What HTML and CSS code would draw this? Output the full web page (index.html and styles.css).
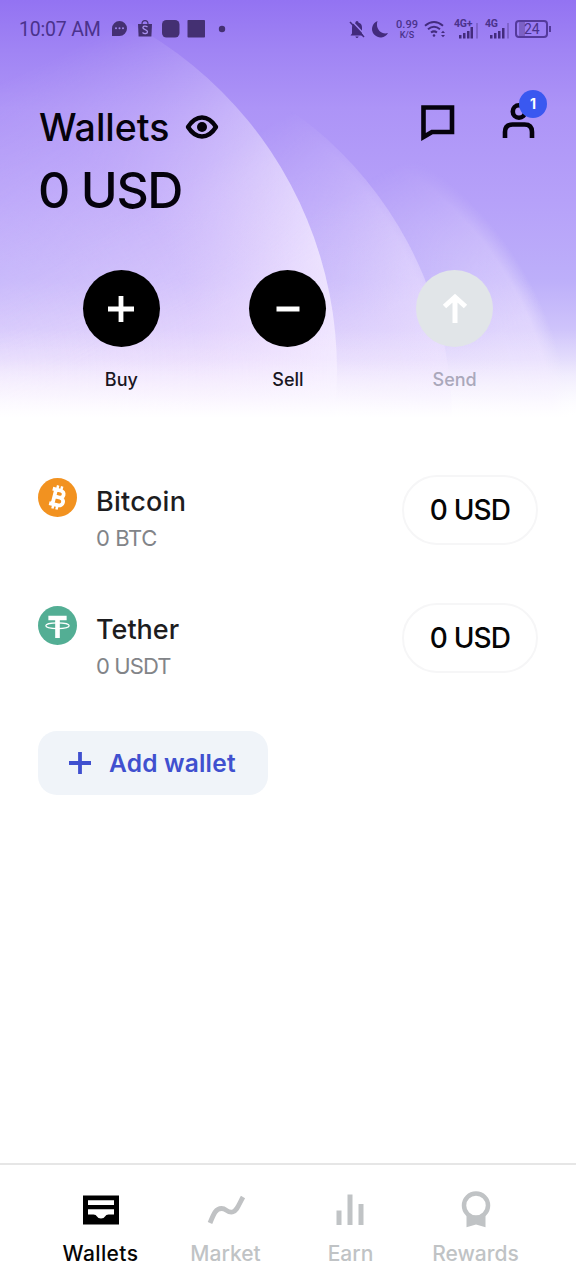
FILE: index.html
```html
<!DOCTYPE html>
<html lang="en">
<head>
<meta charset="utf-8">
<meta name="viewport" content="width=device-width, initial-scale=1">
<title>Wallets</title>
<link rel="stylesheet" href="styles.css">
</head>
<body>
<div class="app">
  <header class="hero">
    <svg class="hero-art" viewBox="0 0 576 418" aria-hidden="true">
      <defs>
        <linearGradient id="base" x1="0" y1="0" x2="0" y2="1">
          <stop offset="0" stop-color="#9373f2"/><stop offset=".12" stop-color="#a084f4"/>
          <stop offset=".26" stop-color="#ad94f7"/><stop offset=".48" stop-color="#b6a1f9"/>
          <stop offset=".67" stop-color="#bdaffa"/><stop offset=".79" stop-color="#cfc4fb"/>
          <stop offset=".9" stop-color="#ebe5fd"/><stop offset="1" stop-color="#fff"/>
        </linearGradient>
        <radialGradient id="a1" gradientUnits="userSpaceOnUse" cx="-57" cy="370" r="394">
          <stop offset=".1" stop-color="#f6e2ff" stop-opacity=".3"/><stop offset=".65" stop-color="#f3e0ff" stop-opacity=".42"/><stop offset="1" stop-color="#f4ebff" stop-opacity=".8"/>
        </radialGradient>
        <radialGradient id="a2" gradientUnits="userSpaceOnUse" cx="74" cy="420" r="378">
          <stop offset=".6" stop-color="#f0ddff" stop-opacity=".2"/><stop offset=".98" stop-color="#eee2ff" stop-opacity=".6"/><stop offset="1" stop-color="#eee2ff" stop-opacity=".5"/>
        </radialGradient>
        <radialGradient id="a3" gradientUnits="userSpaceOnUse" cx="220" cy="450" r="353">
          <stop offset=".6" stop-color="#f0e0ff" stop-opacity=".2"/><stop offset=".86" stop-color="#f0e5ff" stop-opacity=".5"/><stop offset=".95" stop-color="#f0e5ff" stop-opacity=".54"/><stop offset="1" stop-color="#f0e8ff" stop-opacity="0"/>
        </radialGradient>
        <linearGradient id="rise1" gradientUnits="userSpaceOnUse" x1="105" y1="30" x2="235" y2="300">
          <stop offset="0" stop-color="#000"/><stop offset=".3" stop-color="#505050"/><stop offset=".65" stop-color="#b8b8b8"/><stop offset="1" stop-color="#fff"/>
        </linearGradient>
        <linearGradient id="rise2" gradientUnits="userSpaceOnUse" x1="275" y1="120" x2="390" y2="310">
          <stop offset="0" stop-color="#000"/><stop offset=".5" stop-color="#888"/><stop offset="1" stop-color="#fff"/>
        </linearGradient>
        <linearGradient id="rise3" gradientUnits="userSpaceOnUse" x1="395" y1="165" x2="490" y2="340">
          <stop offset="0" stop-color="#000"/><stop offset=".5" stop-color="#888"/><stop offset="1" stop-color="#fff"/>
        </linearGradient>
        <linearGradient id="fade" x1="0" y1="0" x2="0" y2="1">
          <stop offset="0" stop-color="#fff" stop-opacity="0"/><stop offset=".35" stop-color="#fff" stop-opacity=".1"/><stop offset=".75" stop-color="#fff" stop-opacity=".55"/><stop offset="1" stop-color="#fff"/>
        </linearGradient>
        <mask id="m1" maskUnits="userSpaceOnUse" x="0" y="0" width="576" height="418"><path fill="url(#rise1)" d="M0 0h576v418H0z"/></mask>
        <mask id="m2" maskUnits="userSpaceOnUse" x="0" y="0" width="576" height="418"><path fill="url(#rise2)" d="M0 0h576v418H0z"/></mask>
        <mask id="m3" maskUnits="userSpaceOnUse" x="0" y="0" width="576" height="418"><path fill="url(#rise3)" d="M0 0h576v418H0z"/></mask>
      </defs>
      <path fill="url(#base)" d="M0 0h576v418H0z"/>
      <g mask="url(#m3)"><circle cx="220" cy="450" r="353" fill="url(#a3)"/></g>
      <g mask="url(#m2)"><circle cx="74" cy="420" r="378" fill="url(#a2)"/></g>
      <g mask="url(#m1)"><circle cx="-57" cy="370" r="394" fill="url(#a1)"/></g>
      <path fill="url(#fade)" d="M0 328h576v90H0z"/>
    </svg>

    <div class="status">
      <span class="clock">10:07 AM</span>
      <svg class="status-left" width="118" height="20" viewBox="0 0 118 20" fill="#443072">
        <path d="M1 17V9.500a7.500 7.500 0 1 1 7.500 7.500z"/>
        <g fill="#a085ef"><circle cx="5" cy="9.300" r="1"/><circle cx="8.500" cy="9.300" r="1"/><circle cx="12" cy="9.300" r="1"/></g>
        <path d="M27 5h14l-.6 12.500H27.600z"/><path d="M31 5c0-4.500 6-4.500 6 0" fill="none" stroke="#443072" stroke-width="1.200"/>
        <path d="M36.500 8c-2-1.700-5-.8-4.500 1 .5 1.900 4.500 1.300 4.500 3.700 0 2-3 2.500-5 .8" fill="none" stroke="#aa91f0" stroke-width="1.300"/>
        <rect x="51" y="1" width="17.500" height="17.500" rx="4.500"/><rect x="76.500" y="1" width="17.500" height="17.500" rx=".8"/><circle cx="111" cy="10" r="3.200"/>
      </svg>
      <div class="status-right">
        <svg width="42" height="20" viewBox="0 0 42 20" fill="#432b7d">
          <path d="M4 14.500V8.500q0-4 3.500-4.800V3q1.500-2 3 0v.7Q14 4.500 14 8.500v6l1.500 2h-13zM7.300 17.500h3.400q-1.700 3-3.400 0z"/>
          <path d="M3.500 1.500l14 15" stroke="#9f84f2" stroke-width="1.500"/><path d="M2 3l14 15" stroke="#432b7d" stroke-width="1.500"/>
          <path d="M29.500 2a8.500 8.500 0 1 0 10.500 12c-6.500 2-13-4-10.500-12z"/>
        </svg>
        <div class="speed"><span>0.99</span><span class="unit">K/S</span></div>
        <svg width="22" height="20" viewBox="0 0 22 20" fill="none" stroke="#432b7d" stroke-width="2">
          <path d="M1 6.700q9-7.400 18 0M4 10.300q6-5 12 0M7 13.500q3-2.300 6 0"/><circle cx="10" cy="16.500" r="1.300" fill="#432b7d" stroke="none"/><path d="M17 14l2-2.300 2 2.300zM17 16l2 2.300 2-2.300z" fill="#432b7d" stroke="none"/>
        </svg>
        <div class="signal"><span>4G+</span><svg width="24" height="17" viewBox="0 0 24 17" fill="#432b7d"><path d="M4 13h2.500v3.500H4zM8 11h2.500v5.500H8zM12 9h2.500v7.500H12zM15.500 5h2.500v11.500h-2.500z"/><path fill="#7f63cc" d="M21 1h2v15.500h-2z"/></svg></div>
        <div class="signal second"><span>4G</span><svg width="24" height="17" viewBox="0 0 24 17" fill="#432b7d"><path d="M4 13h2.500v3.500H4zM8 11h2.500v5.500H8zM12 9h2.500v7.500H12zM16 6h2.500v10.500H16z"/><path fill="#7f63cc" d="M21 1h2v15.500h-2z"/></svg></div>
        <div class="battery"><span>24</span></div>
      </div>
    </div>

    <div class="title-row">
      <h1>Wallets</h1>
      <svg class="eye" width="34" height="26" viewBox="0 0 34 26"><path d="M3 13Q9 3.500 17 3.500t14 9.500q-6 9.500-14 9.500T3 13z" fill="none" stroke="#05020c" stroke-width="4.400" stroke-linejoin="round"/><circle cx="17" cy="13" r="5" fill="#05020c"/></svg>
      <svg class="chat" width="34" height="36" viewBox="0 0 34 36"><path d="M2.500 2.500h28.500v24.500H11L2.500 32z" fill="none" stroke="#05020c" stroke-width="4.600"/></svg>
      <div class="profile">
        <svg width="34" height="38" viewBox="0 0 34 38" fill="none" stroke="#05020c" stroke-width="4.600"><circle cx="17" cy="9.500" r="6.200"/><path d="M3 36v-6q0-7.500 7.500-7.500h12q7.500 0 7.500 7.500v6"/></svg>
        <span class="badge">1</span>
      </div>
    </div>
    <div class="balance">0 USD</div>

    <div class="actions">
      <div class="action"><span class="disc"><svg width="28" height="28" viewBox="0 0 28 28"><path d="M14 1v26M1 14h26" stroke="#fff" stroke-width="4.800"/></svg></span><span>Buy</span></div>
      <div class="action"><span class="disc"><svg width="28" height="28" viewBox="0 0 28 28"><path d="M2.500 14h23" stroke="#fff" stroke-width="5"/></svg></span><span>Sell</span></div>
      <div class="action disabled"><span class="disc"><svg width="28" height="32" viewBox="0 0 28 32"><path d="M14 30V5M3.500 13.500L14 4l10.500 9.500" fill="none" stroke="#fff" stroke-width="5"/></svg></span><span>Send</span></div>
    </div>
  </header>

  <main class="wallets">
    <div class="wallet">
      <svg class="coin" width="39" height="39" viewBox="0 0 32 32"><circle cx="16" cy="16" r="16" fill="#f29220"/><g transform="rotate(14 16 16) translate(2.400 2.400) scale(.85)" fill="none" stroke="#fff"><path d="M12.800 8v16M9.500 8.800h8.200a3.400 3.400 0 0 1 0 6.800h-4.500M9.500 23.200h9a3.800 3.800 0 0 0 0-7.600h-5" stroke-width="3.600"/><path d="M13.800 4.500v4M17.800 4.500v4M13.800 23.500v4M17.800 23.500v4" stroke-width="2.400"/></g></svg>
      <div class="names"><span class="name">Bitcoin</span><span class="amount">0 BTC</span></div>
      <span class="pill">0 USD</span>
    </div>
    <div class="wallet">
      <svg class="coin" width="39" height="39" viewBox="0 0 32 32"><circle cx="16" cy="16" r="16" fill="#53ae94"/><path d="M8.500 8h15v3.700h-5.600v14.500h-3.800V11.700H8.500z" fill="#fff"/><ellipse cx="16" cy="16.200" rx="9.600" ry="2.300" fill="none" stroke="#fff" stroke-width="1"/></svg>
      <div class="names"><span class="name tight">Tether</span><span class="amount usdt">0 USDT</span></div>
      <span class="pill">0 USD</span>
    </div>
    <div class="add"><svg width="22" height="22" viewBox="0 0 22 22"><path d="M11 0v22M0 11h22" stroke="#4050cf" stroke-width="3.800"/></svg><span>Add wallet</span></div>
  </main>

  <nav class="tabs">
    <div class="tab active"><svg width="40" height="40" viewBox="0 0 40 40"><path fill="#000" d="M2 5.500h36v29H2z"/><path fill="#fff" d="M7 10.200h26v4.800H7zM7 19.200h26v5.300h-5.500q-2.500 0-3.500 2-1 2-4 2t-4-2q-1-2-3.500-2H7z"/></svg><span>Wallets</span></div>
    <div class="tab"><svg width="40" height="40" viewBox="0 0 40 40"><path fill="none" stroke="#c0c2c4" stroke-width="4.800" d="M4 33C8 23 10 18.500 15.500 18.500c5 0 5.500 4.500 11 3.500C31 21 33 14 37 7"/></svg><span>Market</span></div>
    <div class="tab"><svg width="40" height="40" viewBox="0 0 40 40"><path fill="#c0c3c5" d="M5.500 20.500h5V35h-5zM16.500 4.500h5V35h-5zM27.500 14h5v21h-5z"/></svg><span>Earn</span></div>
    <div class="tab"><svg width="40" height="40" viewBox="0 0 40 40"><path fill="#c0c3c5" d="M10.500 24h19v13.200L20 34.500l-9.500 2.700z"/><circle cx="20" cy="15.500" r="12" fill="#fff" stroke="#c0c3c5" stroke-width="4.500"/></svg><span>Rewards</span></div>
  </nav>
</div>
</body>
</html>
```
FILE: styles.css
```css
* { box-sizing: border-box; }
body { margin: 0; background: #fff; font-family: Inter, "Open Sans", sans-serif; font-weight: 500; color: #05020c; }
svg { display: block; flex: none; }
.app { width: 576px; height: 1280px; display: flex; flex-direction: column; overflow: hidden; background: #fff; }
.hero { position: relative; isolation: isolate; height: 418px; flex: none; }
.hero-art { position: absolute; inset: 0; z-index: -1; width: 576px; height: 418px; }

.status { display: flex; height: 58px; align-items: center; padding: 0 28px 0 19px; font-family: Roboto, sans-serif; font-weight: 400; color: #4a328c; }
.clock { width: 92px; font-size: 19.500px; letter-spacing: -.2px; white-space: nowrap; }
.status-right { display: flex; align-items: center; margin-left: auto; }
.speed { display: flex; flex-direction: column; align-items: center; width: 30px; margin-left: 2px; margin-right: 2px; font-size: 11px; line-height: 11px; font-weight: 500; }
.speed .unit { font-size: 9px; line-height: 10px; }
.signal { display: grid; width: 25px; height: 20px; margin-left: 8px; }
.signal > * { grid-area: 1 / 1; }
.signal span { font-size: 10.5px; line-height: 10px; font-weight: 700; letter-spacing: -.2px; }
.signal svg { align-self: end; justify-self: end; }
.signal.second { margin-left: 6px; }
.battery { display: flex; align-items: center; position: relative; width: 33px; height: 18px; margin-left: 5px; padding-left: 7px; border: 2px solid #543a9b; border-radius: 4px; font-size: 14px; line-height: 14px; background: linear-gradient(90deg, transparent 2px, #7c60c5 2px, #7c60c5 8px, transparent 8px); }
.battery::after { content: ""; position: absolute; right: -5px; top: 4px; width: 2px; height: 6px; background: #543a9b; }

.title-row { display: flex; height: 56px; margin-top: 41px; padding: 0 40px 0 39px; align-items: center; }
h1 { width: 146px; margin: 0; padding-top: 2px; font-size: 37.500px; line-height: 56px; font-weight: 500; letter-spacing: 0; }
.chat { margin: 0 47px 8px auto; }
.profile { position: relative; margin-bottom: 12px; }
.badge { position: absolute; left: 17px; top: -12px; width: 28px; height: 28px; border-radius: 50%; background: #3a58f0; color: #fff; font-size: 14px; line-height: 28px; font-weight: 700; text-align: center; }
.balance { height: 70px; padding-left: 38px; font-size: 50px; line-height: 71px; letter-spacing: -1.400px; }

.actions { display: grid; grid-template-columns: repeat(3, 1fr); padding: 0 38px; margin-top: 45px; }
.action { display: flex; flex-direction: column; align-items: center; gap: 21px; font-size: 18px; line-height: 24px; color: #191622; }
.disc { display: grid; place-items: center; width: 77px; height: 77px; border-radius: 50%; background: #000; }
.disabled { color: #aaa8bb; }
.disabled .disc { background: #e1e5e8; }

.wallets { display: flex; flex-direction: column; flex: 1; padding: 57px 38px 0; }
.wallet { display: flex; height: 70px; margin-bottom: 58px; }
.coin { margin-top: 3px; }
.names { display: flex; flex-direction: column; margin-left: 19px; padding-top: 8px; }
.name { font-size: 27px; line-height: 37px; color: #1d1d1f; letter-spacing: .25px; }
.tight { letter-spacing: 0; }
.amount { font-size: 22px; line-height: 37px; font-weight: 400; color: #828488; letter-spacing: -.4px; }
.usdt { letter-spacing: -.9px; }
.pill { width: 136px; height: 70px; margin-left: auto; border: 2px solid #f6f6f7; border-radius: 35px; font-size: 28px; line-height: 67px; text-align: center; letter-spacing: -.8px; color: #050505; }
.add { display: flex; align-items: center; gap: 18px; width: 230px; height: 64px; padding-left: 31px; border-radius: 19px; background: #f0f4f9; color: #4050cf; font-size: 24.500px; line-height: 62px; letter-spacing: .2px; font-weight: 600; white-space: nowrap; }

.tabs { display: grid; grid-template-columns: repeat(4, 1fr); height: 117px; padding: 25px 38px 0; border-top: 2px solid #e6e6e6; }
.tab { display: flex; flex-direction: column; align-items: center; gap: 9px; font-size: 21px; line-height: 30px; color: #c0c3c5; }
.active { color: #050505; letter-spacing: .4px; }
```
